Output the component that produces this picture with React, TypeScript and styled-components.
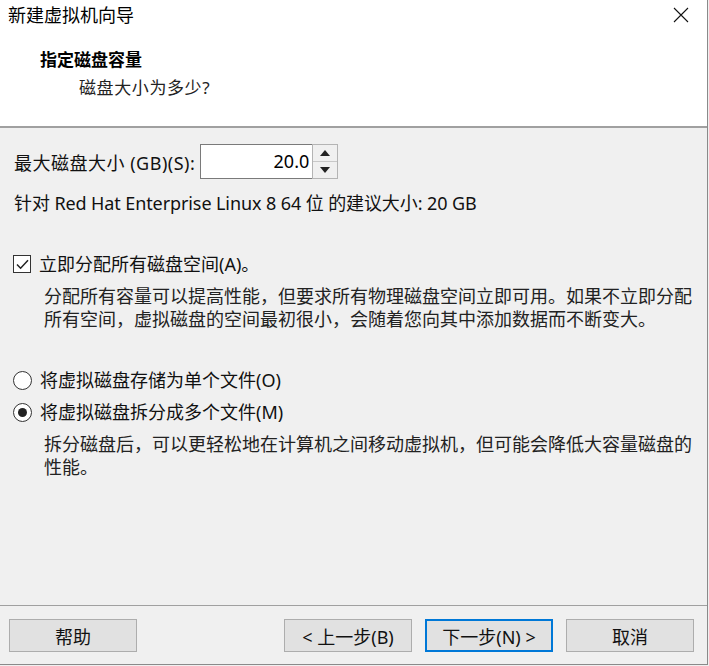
import styled, { createGlobalStyle } from "styled-components";

const GlobalStyle = createGlobalStyle`
  html, body {
    margin: 0;
    padding: 0;
    background: #f0f0f0;
  }
  * {
    box-sizing: border-box;
  }
`;

const font = `"Noto Sans", "Noto Sans CJK SC", sans-serif`;

export default function App() {
  return (
    <>
      <GlobalStyle />
      <Window>
        <Header>
          <TitleBar>
            <Title>新建虚拟机向导</Title>
            <CloseButton aria-label="关闭">
              <svg width="16" height="16" viewBox="0 0 16 16">
                <path d="M1 1L15 15M15 1L1 15" stroke="#111" strokeWidth="1.1" fill="none" />
              </svg>
            </CloseButton>
          </TitleBar>
          <Heading>指定磁盘容量</Heading>
          <SubHeading>磁盘大小为多少?</SubHeading>
        </Header>

        <Body>
          <SizeRow>
            <Label>最大磁盘大小 (GB)(S):</Label>
            <Spin>
              <SpinInput defaultValue="20.0" />
              <SpinButtons>
                <SpinButton>
                  <svg width="10" height="6" viewBox="0 0 10 6">
                    <path d="M0 6L5 0L10 6Z" fill="#222" />
                  </svg>
                </SpinButton>
                <SpinButton>
                  <svg width="10" height="6" viewBox="0 0 10 6">
                    <path d="M0 0L10 0L5 6Z" fill="#222" />
                  </svg>
                </SpinButton>
              </SpinButtons>
            </Spin>
          </SizeRow>

          <Text>针对 Red Hat Enterprise Linux 8 64 位 的建议大小: 20 GB</Text>

          <OptionRow $top={38}>
            <CheckBox>
              <svg width="13" height="11" viewBox="0 0 13 11">
                <path d="M1 5.5L4.6 9.2L12 1.2" stroke="#222" strokeWidth="1.5" fill="none" />
              </svg>
            </CheckBox>
            <OptionLabel>立即分配所有磁盘空间(A)。</OptionLabel>
          </OptionRow>
          <Description>
            分配所有容量可以提高性能，但要求所有物理磁盘空间立即可用。如果不立即分配
            <br />
            所有空间，虚拟磁盘的空间最初很小，会随着您向其中添加数据而不断变大。
          </Description>

          <OptionRow $top={38}>
            <Radio $checked={false} />
            <OptionLabel>将虚拟磁盘存储为单个文件(O)</OptionLabel>
          </OptionRow>
          <OptionRow $top={10}>
            <Radio $checked />
            <OptionLabel>将虚拟磁盘拆分成多个文件(M)</OptionLabel>
          </OptionRow>
          <Description>
            拆分磁盘后，可以更轻松地在计算机之间移动虚拟机，但可能会降低大容量磁盘的
            <br />
            性能。
          </Description>
        </Body>

        <Footer>
          <Button>帮助</Button>
          <Spacer />
          <Button>&lt; 上一步(B)</Button>
          <Button $primary>下一步(N) &gt;</Button>
          <Button>取消</Button>
        </Footer>
      </Window>
    </>
  );
}

const Window = styled.div`
  width: 708px;
  height: 665px;
  display: flex;
  flex-direction: column;
  background: #f0f0f0;
  border-right: 1px solid #8a8a8a;
  border-bottom: 1px solid #8a8a8a;
  font-family: ${font};
  color: #111;
`;

const Header = styled.div`
  height: 128px;
  background: #ffffff;
  border-bottom: 2px solid #a0a0a0;
  display: flex;
  flex-direction: column;
`;

const TitleBar = styled.div`
  height: 30px;
  display: flex;
  align-items: center;
  justify-content: space-between;
  padding: 0 18px 0 8px;
`;

const Title = styled.div`
  font-size: 18px;
  line-height: 30px;
  color: #000;
`;

const CloseButton = styled.div`
  width: 16px;
  height: 16px;
  display: flex;
`;

const Heading = styled.div`
  margin: 16px 0 0 40px;
  font-size: 17px;
  font-weight: 700;
  line-height: 28px;
  color: #000;
`;

const SubHeading = styled.div`
  margin: 0 0 0 79px;
  font-size: 17px;
  line-height: 28px;
  letter-spacing: 0.6px;
  color: #222;
`;

const Body = styled.div`
  flex: 1;
  padding: 16px 0 0 14px;
  display: flex;
  flex-direction: column;
`;

const SizeRow = styled.div`
  display: flex;
  align-items: center;
  gap: 5px;
  height: 35px;
`;

const Label = styled.div`
  font-size: 18px;
  letter-spacing: 0.5px;
  color: #111;
`;

const Spin = styled.div`
  display: flex;
  height: 35px;
`;

const SpinInput = styled.input`
  width: 112px;
  height: 35px;
  border: 1px solid #7a7a7a;
  border-right: none;
  background: #fff;
  text-align: right;
  padding: 0 3px 2px 0;
  font-family: ${font};
  font-size: 18px;
  color: #000;
  outline: none;
`;

const SpinButtons = styled.div`
  width: 26px;
  display: flex;
  flex-direction: column;
  border: 1px solid #b4b4b4;
  background: #f0f0f0;
`;

const SpinButton = styled.div`
  flex: 1;
  display: flex;
  align-items: center;
  justify-content: center;
  & + & {
    border-top: 1px solid #c8c8c8;
  }
`;

const Text = styled.div`
  margin-top: 12px;
  font-size: 18px;
  line-height: 24px;
  letter-spacing: -0.1px;
  color: #111;
`;

const OptionRow = styled.div<{ $top: number }>`
  margin-top: ${(p) => p.$top}px;
  margin-left: -1px;
  display: flex;
  align-items: center;
  gap: 8px;
  height: 22px;
`;

const CheckBox = styled.div`
  width: 18px;
  height: 18px;
  border: 1px solid #333;
  background: #fff;
  display: flex;
  align-items: center;
  justify-content: center;
`;

const Radio = styled.div<{ $checked?: boolean }>`
  width: 19px;
  height: 19px;
  border-radius: 50%;
  border: 1px solid #333;
  background: #fff;
  display: flex;
  align-items: center;
  justify-content: center;
  &::after {
    content: "";
    width: 9px;
    height: 9px;
    border-radius: 50%;
    background: ${(p) => (p.$checked ? "#222" : "transparent")};
  }
`;

const OptionLabel = styled.div`
  font-size: 18px;
  line-height: 22px;
  color: #111;
`;

const Description = styled.div`
  margin: 10px 0 0 30px;
  font-size: 18px;
  line-height: 23px;
  color: #222;
`;

const Footer = styled.div`
  height: 59px;
  border-top: 1px solid #a0a0a0;
  display: flex;
  align-items: flex-start;
  gap: 13px;
  padding: 13px 13px 0 9px;
`;

const Spacer = styled.div`
  flex: 1;
`;

const Button = styled.div<{ $primary?: boolean }>`
  width: 128px;
  height: 33px;
  display: flex;
  align-items: center;
  justify-content: center;
  background: #e1e1e1;
  border: ${(p) => (p.$primary ? "2px solid #0078d7" : "1px solid #adadad")};
  font-size: 18px;
  color: #111;
`;
